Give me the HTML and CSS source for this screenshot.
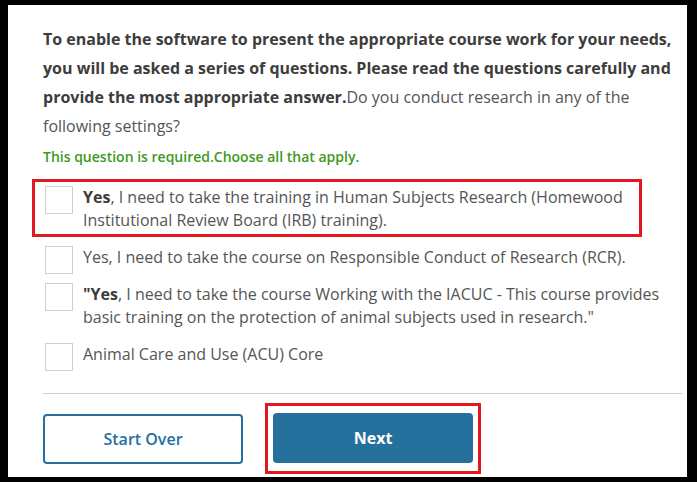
FILE: index.html
```html
<!DOCTYPE html>
<html>
<head>
    <meta charset="UTF-8">
    <meta name="viewport" content="width=device-width, initial-scale=1.0">
    <title>Course questions</title>
    <link rel="stylesheet" href="styles.css">
</head>
<body>
    <div class="panel">
        <p class="prompt"><strong>To enable the software to present the appropriate course work for your needs, you will be asked a series of questions. Please read the questions carefully and provide the most appropriate answer.</strong>Do you conduct research in any of the following settings?</p>
        <p class="hint">This question is required.Choose all that apply.</p>
        <ul class="choices">
            <li class="choice flagged">
                <span class="box"></span>
                <span class="label"><strong>Yes</strong>, I need to take the training in Human Subjects Research (Homewood Institutional Review Board (IRB) training).</span>
            </li>
            <li class="choice">
                <span class="box"></span>
                <span class="label">Yes, I need to take the course on Responsible Conduct of Research (RCR).</span>
            </li>
            <li class="choice">
                <span class="box"></span>
                <span class="label"><strong>"Yes</strong>, I need to take the course Working with the IACUC - This course provides basic training on the protection of animal subjects used in research."</span>
            </li>
            <li class="choice">
                <span class="box"></span>
                <span class="label">Animal Care and Use (ACU) Core</span>
            </li>
        </ul>
        <div class="actions">
            <button class="btn btn-outline" type="button">Start Over</button>
            <span class="flag-wrap">
                <button class="btn btn-primary" type="submit">Next</button>
            </span>
        </div>
    </div>
</body>
</html>
```

FILE: styles.css
```css
* {
    box-sizing: border-box;
}
html, body {
    height: 100%;
}
body {
    margin: 0;
    background-color: #000;
    padding: 5px 10px 5px 8px;
    font-family: 'Open Sans', sans-serif;
}
.panel {
    background-color: #fff;
    height: 100%;
    padding: 20px 5px 0 35px;
}
.prompt {
    margin: 0;
    font-size: 16px;
    line-height: 29px;
    color: #555;
}
.prompt strong {
    color: #3d3d3d;
}
.hint {
    margin: 6px 0 12px;
    font-size: 14px;
    line-height: 20px;
    font-weight: 600;
    color: #3c9a1c;
}
.choices {
    list-style: none;
    margin: 0 0 0 -11px;
    padding: 0;
}
.choice {
    position: relative;
    display: flex;
    align-items: flex-start;
    gap: 10px;
    padding: 7px 10px 6px 13px;
    margin-bottom: 1px;
    font-size: 16px;
    line-height: 23px;
    color: #555;
}
.choice strong {
    color: #3d3d3d;
}
/* red highlight drawn over the first answer */
.choice.flagged::after {
    content: "";
    position: absolute;
    top: 0;
    left: 0;
    width: 610px;
    height: 58px;
    border: 3px solid #e3171f;
    box-sizing: border-box;
}
.box {
    flex: none;
    width: 28px;
    height: 28px;
    margin-bottom: -5px;
    border: 1px solid #cfcfcf;
    background-color: #fff;
}
.actions {
    display: flex;
    align-items: center;
    gap: 22px;
    margin-top: 21px;
    padding-top: 9px;
    border-top: 1px solid #cccccc;
}
.btn {
    width: 200px;
    height: 50px;
    border-radius: 4px;
    font-family: 'Open Sans', sans-serif;
    font-size: 16px;
    font-weight: 600;
    cursor: pointer;
}
.btn-outline {
    background-color: #fff;
    border: 2px solid #26709f;
    color: #26709f;
}
.btn-primary {
    background-color: #26709e;
    border: none;
    color: #fff;
    font-weight: 700;
}
.flag-wrap {
    display: block;
    border: 3px solid #e3171f;
    padding: 7px 5px 8px;
}
.flag-wrap .btn {
    display: block;
}
```
